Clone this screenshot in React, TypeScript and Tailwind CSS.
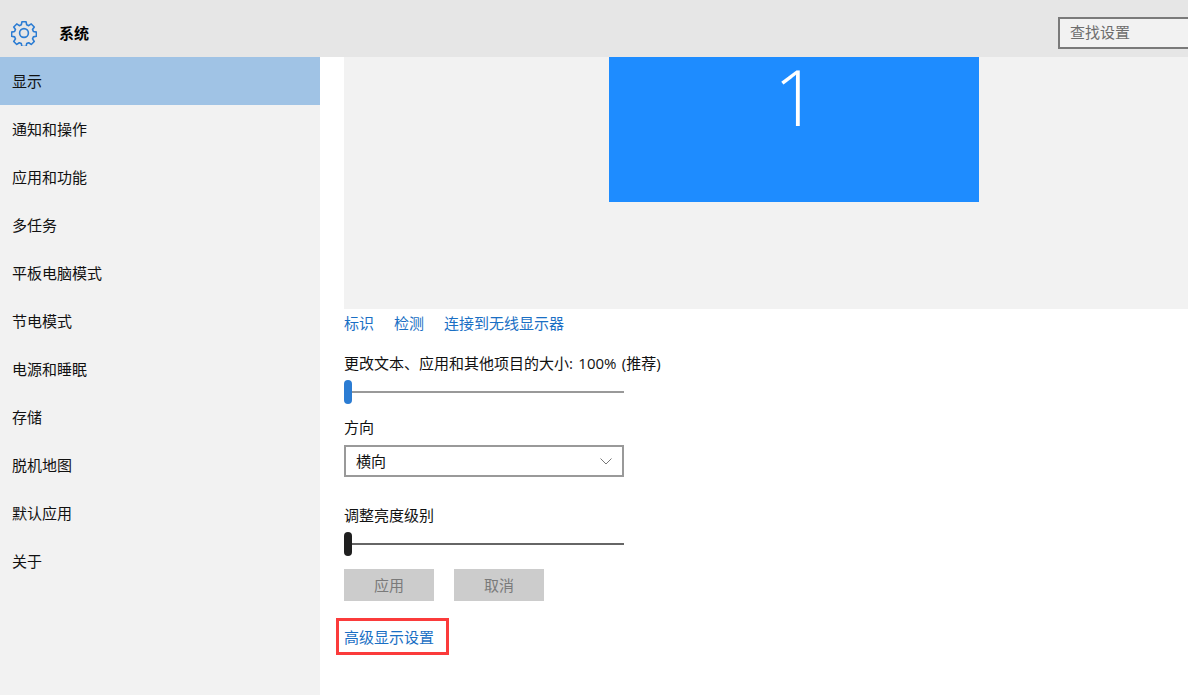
import React from 'react';

const FONT = "font-['Open_Sans','Noto_Sans_CJK_SC',sans-serif]";

const navItems = ['显示', '通知和操作', '应用和功能', '多任务', '平板电脑模式', '节电模式', '电源和睡眠', '存储', '脱机地图', '默认应用', '关于'];

const Gear = () => (
  <svg width="26" height="26" viewBox="0 0 26 26" fill="none" stroke="#2b7cd3" strokeWidth="1.6" strokeLinejoin="round">
    <circle cx="13" cy="13" r="4.4" />
    <path d="M10.9 1.800h4.200l.6 3 2 .85 2.550-1.700 3 3-1.700 2.550.85 2 3 .6v4.200l-3 .6-.85 2 1.700 2.550-3 3-2.550-1.700-2 .85-.6 3h-4.200l-.6-3-2-.85-2.550 1.700-3-3 1.700-2.550-.85-2-3-.6v-4.200l3-.6.85-2-1.700-2.550 3-3 2.550 1.700 2-.85z" />
  </svg>
);

const Slider = ({ thumb, track }: { thumb: string; track: string }) => (
  <div className="relative h-6 w-[280px] flex items-center">
    <div className={`h-0.5 w-full ${track}`}></div>
    <div className={`absolute left-0 top-0 h-6 w-2 rounded-full ${thumb}`}></div>
  </div>
);

const App: React.FC = () => {
  return (
    <div className={`h-[695px] w-[1188px] overflow-hidden bg-white text-[15px] text-[#111] flex flex-col ${FONT}`}>
      {/* Title bar */}
      <div className="h-[57px] shrink-0 bg-[#e6e6e6] flex items-center justify-between pt-[9px]">
        <div className="flex items-center pl-[11px]">
          <Gear />
          <span className="ml-[22px] text-[15px] font-bold text-black">系统</span>
        </div>
        <div className="h-8 w-[130px] border-2 border-r-0 border-[#7a7a7a] bg-[#f2f2f2] pl-2.5 leading-[26px] text-[#6d6d6d] -mt-[9px] translate-y-[4px]">查找设置</div>
      </div>

      <div className="flex flex-1 min-h-0">
        {/* Sidebar */}
        <div className="w-80 shrink-0 bg-[#f2f2f2]">
          {navItems.map((item, i) => (
            <div key={item} className={`h-12 pl-3 flex items-center ${i === 0 ? 'bg-[#a0c3e5]' : ''}`}>{item}</div>
          ))}
        </div>

        {/* Content */}
        <div className="flex-1 pl-6">
          <div className="h-[252px] bg-[#f2f2f2] flex justify-center">
            <div className="h-[145px] w-[370px] bg-[#1e8cff] ml-[56px] flex justify-center text-white">
              <span className="pl-[4px] font-['Open_Sans',sans-serif] font-light text-[78px] leading-[78px]">1</span>
            </div>
          </div>

          <div className="mt-[4px] flex gap-5 text-[#1a6fc4] leading-5">
            <span>标识</span>
            <span>检测</span>
            <span>连接到无线显示器</span>
          </div>

          <div className="mt-[20px] leading-5 [word-spacing:1.5px]">更改文本、应用和其他项目的大小: 100% (推荐)</div>
          <div className="mt-[7px]">
            <Slider thumb="bg-[#2b7cd3]" track="bg-[#999999]" />
          </div>

          <div className="mt-[13px] leading-5">方向</div>
          <div className="mt-[8px] h-8 w-[280px] border-2 border-[#999999] flex items-center justify-between pl-2.5 pr-2.5">
            <span>横向</span>
            <svg width="12" height="7" viewBox="0 0 12 7" fill="none" stroke="#777" strokeWidth="1">
              <path d="M.5.5 6 6 11.500.5" />
            </svg>
          </div>

          <div className="mt-[28px] leading-5">调整亮度级别</div>
          <div className="mt-[7px]">
            <Slider thumb="bg-[#1f1f1f]" track="bg-[#666666]" />
          </div>

          <div className="mt-[13px] flex gap-5">
            <div className="h-8 w-[90px] bg-[#cccccc] text-[#7a7a7a] flex items-center justify-center">应用</div>
            <div className="h-8 w-[90px] bg-[#cccccc] text-[#7a7a7a] flex items-center justify-center">取消</div>
          </div>

          <div className="relative mt-[26px] leading-5 w-fit text-[#1a6fc4]">
            高级显示设置
            <div className="absolute -left-2 -right-[15px] -top-[9px] -bottom-2 border-[3px] border-[#fb3b3b]"></div>
          </div>
        </div>
      </div>
    </div>
  );
};

export default App;
